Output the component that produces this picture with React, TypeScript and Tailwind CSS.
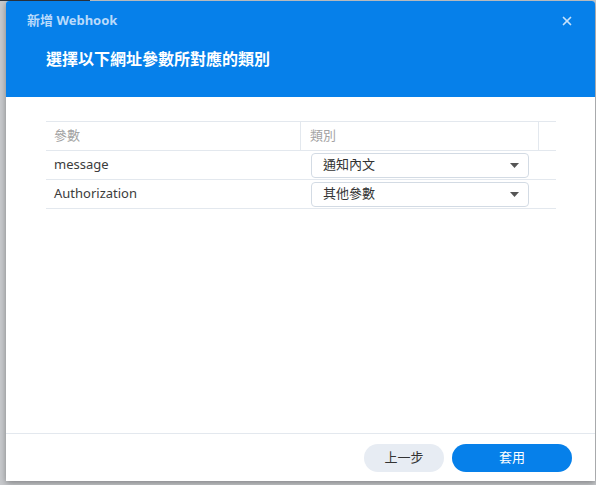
import { X } from "lucide-react";

const rows = [
  { name: "message", type: "通知內文" },
  { name: "Authorization", type: "其他參數" },
];

const SelectBox = (props: { value: string }) => (
  <div className="flex h-[25px] w-[218px] items-center justify-between rounded-[4px] border border-[#d3dbe4] bg-white pl-[11px] pr-[9px]">
    <span className="text-[13px] text-[#333]">{props.value}</span>
    <svg width="9" height="5" viewBox="0 0 9 5">
      <path d="M0 0h9L4.5 5z" fill="#555" />
    </svg>
  </div>
);

export default function App() {
  return (
    <div
      className="relative h-[485px] w-[596px] overflow-hidden bg-[#c7c9cc]"
      style={{ fontFamily: '"Noto Sans", "Noto Sans CJK TC", sans-serif' }}
    >
      <div className="h-[1px] w-[90px] bg-[#2c3540]" />
      <div className="pl-[6px]">
        <div className="flex h-[480px] w-[589px] flex-col overflow-hidden rounded-t-[3px] bg-white shadow-[0_2px_6px_rgba(0,0,0,0.35)]">
          <div className="h-[96px] bg-[#0680ea]">
            <div className="flex h-[40px] items-center justify-between pl-[21px] pr-[21px]">
              <span className="text-[13px] font-bold text-[#b9dafb]">新增 Webhook</span>
              <X size={14} strokeWidth={3} className="text-[#c6e1fb]" />
            </div>
            <div className="pl-[40px] pt-[7px] text-[16px] font-bold leading-[22px] text-white">
              選擇以下網址參數所對應的類別
            </div>
          </div>
          <div className="flex-1 pl-[40px] pt-[24px]">
            <div className="w-[510px] border-t border-[#e3e8ee] text-[13px]">
              <div className="flex h-[29px] border-b border-[#e3e8ee] text-[#a3a3a3]">
                <div className="flex w-[255px] items-center border-r border-[#e3e8ee] pl-[8px]">參數</div>
                <div className="flex w-[238px] items-center border-r border-[#e3e8ee] pl-[9px]">類別</div>
                <div className="flex-1" />
              </div>
              {rows.map((row) => (
                <div key={row.name} className="flex h-[29px] items-center border-b border-[#e3e8ee]">
                  <div className="w-[255px] pl-[8px] text-[#3c3c3c]">{row.name}</div>
                  <div className="pl-[10px]">
                    <SelectBox value={row.type} />
                  </div>
                </div>
              ))}
            </div>
          </div>
          <div className="flex h-[48px] items-center justify-end gap-[8px] border-t border-[#e3e8ee] pr-[23px]">
            <button className="h-[28px] w-[80px] rounded-full bg-[#e7ecf3] text-[13px] text-[#333]">上一步</button>
            <button className="h-[28px] w-[120px] rounded-full bg-[#0680ea] text-[13px] text-white">套用</button>
          </div>
        </div>
      </div>
    </div>
  );
}
